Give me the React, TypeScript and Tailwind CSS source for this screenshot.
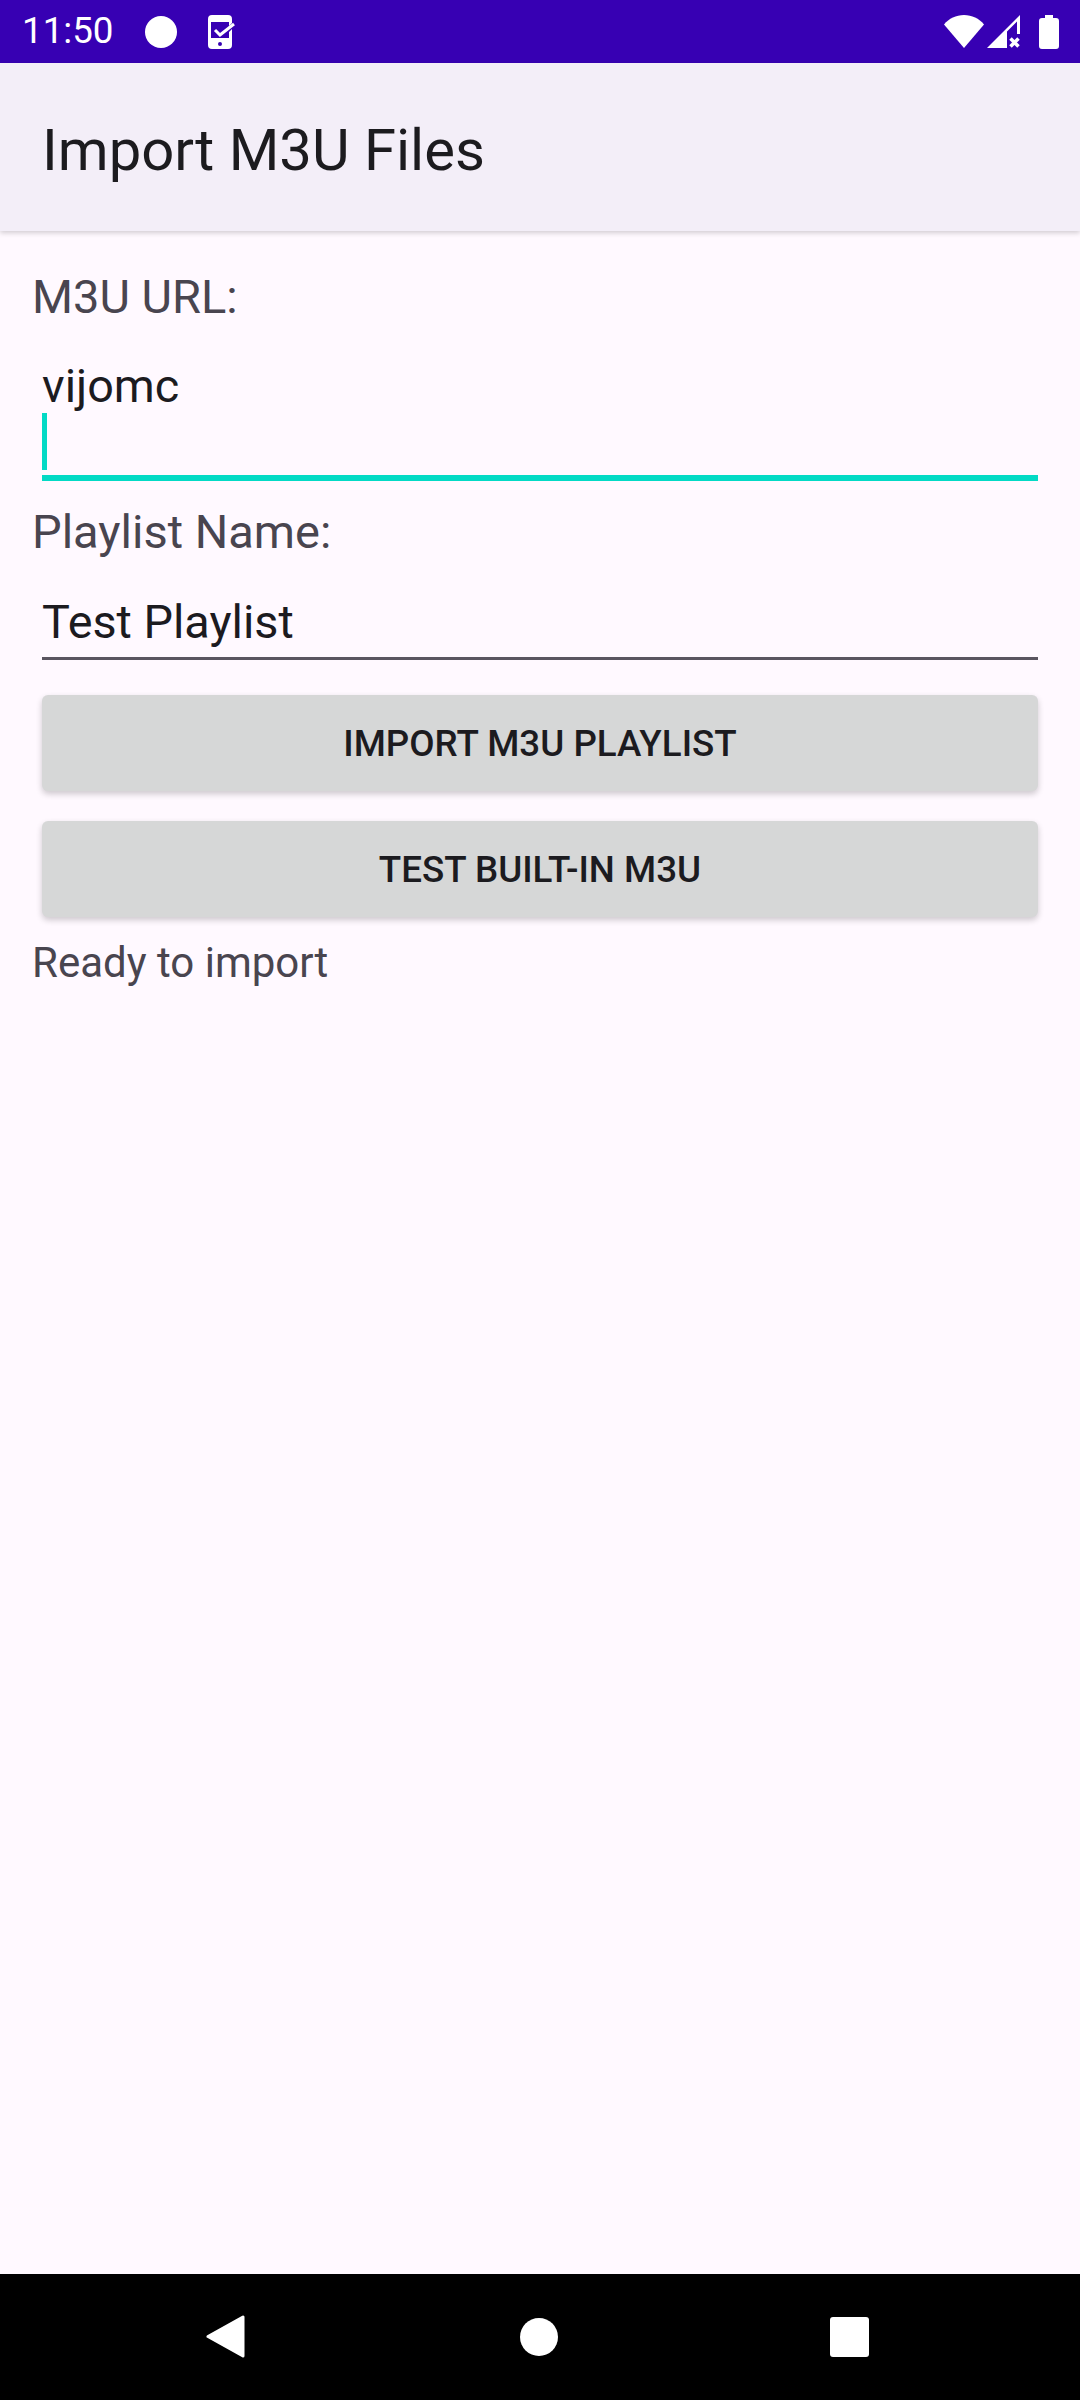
function StatusBar() {
  return (
    <div className="flex h-[63px] shrink-0 items-center bg-[#3700b3] pl-[22px] text-white">
      <span className="w-[100px] text-[36.75px] leading-none">11:50</span>
      <span className="ml-[23px] h-[32px] w-[32px] rounded-full bg-white" />
      <svg className="ml-[31px]" width="28" height="34" viewBox="0 0 28 34" fill="none">
        <path
          fillRule="evenodd"
          fill="#fff"
          d="M4 0h16a4 4 0 0 1 4 4v4l-3 3V7H3v16h18v-6l3-3V30a4 4 0 0 1-4 4H4a4 4 0 0 1-4-4V4a4 4 0 0 1 4-4zM12 27a2 2 0 1 0 0 4a2 2 0 0 0 0-4z"
        />
        <path d="M7 15l5 5L26 9" stroke="#fff" strokeWidth="3" />
      </svg>
      <div className="ml-auto flex items-center pr-[21px]">
        <svg width="40" height="33" viewBox="0 0 40 33">
          <path fill="#fff" d="M0 9.500C5 3.500 12 0 20 0s15 3.500 20 9.500L20 33z" />
        </svg>
        <svg className="ml-[3px]" width="33" height="33" viewBox="0 0 33 33">
          <path fill="#fff" d="M33 0v19h-3V6.500L20 16.500V33H0z" />
          <path d="M23.500 23.500l8 8M31.500 23.500l-8 8" stroke="#fff" strokeWidth="3.500" />
        </svg>
        <svg className="ml-[19px]" width="20" height="34" viewBox="0 0 20 34">
          <path fill="#fff" d="M6 0h8v3h3a3 3 0 0 1 3 3v25a3 3 0 0 1-3 3H3a3 3 0 0 1-3-3V6a3 3 0 0 1 3-3h3z" />
        </svg>
      </div>
    </div>
  );
}

function NavBar() {
  return (
    <div className="flex h-[126px] shrink-0 items-center bg-black pb-[1px]">
      <svg className="ml-[206px]" width="39" height="43" viewBox="0 0 39 43">
        <path fill="#fff" stroke="#fff" strokeWidth="3" strokeLinejoin="round" d="M37 2v39L2 21.500z" />
      </svg>
      <span className="ml-[275px] h-[38px] w-[38px] rounded-full bg-white" />
      <span className="ml-[272px] h-[40px] w-[39px] rounded-[3px] bg-white" />
    </div>
  );
}

function Button({ label }: { label: string }) {
  return (
    <button
      type="button"
      className="flex h-[96px] w-full items-center justify-center rounded-[6px] bg-[#d6d7d7] pt-[2px] text-[36.75px] font-medium text-[#1c1b1f] shadow-[0_3px_6px_rgba(0,0,0,0.2)]"
    >
      {label}
    </button>
  );
}

export default function App() {
  return (
    <div className="flex h-[2400px] w-[1080px] flex-col bg-[#fff9ff] font-['Roboto',sans-serif]">
      <StatusBar />
      <header className="z-10 flex h-[168px] shrink-0 items-center bg-[#f3eef8] pl-[42px] pt-[6px] text-[58px] text-[#1c1b1f] shadow-[0_2px_5px_rgba(0,0,0,0.18)]">
        Import M3U Files
      </header>
      <main className="flex flex-1 flex-col px-[32px] pt-[40px]">
        <div className="text-[47px] leading-[52px] text-[#49454f]">M3U URL:</div>
        <div className="mx-[10px] mt-[37px]">
          <div className="text-[46.75px] leading-[52px] text-[#1c1b1f]">vijomc</div>
          <div className="mt-[1px] h-[57px] w-[5px] bg-[#03dac5]" />
          <div className="mt-[5px] h-[6px] bg-[#03dac5]" />
        </div>
        <div className="mt-[25px] text-[47px] leading-[52px] text-[#49454f]">Playlist Name:</div>
        <div className="mx-[10px] mt-[38px]">
          <div className="text-[46.75px] leading-[52px] text-[#1c1b1f]">Test Playlist</div>
          <div className="mt-[9px] h-[3px] bg-[#5a5560]" />
        </div>
        <div className="mx-[10px] mt-[35px] flex flex-col gap-[30px]">
          <Button label="IMPORT M3U PLAYLIST" />
          <Button label="TEST BUILT-IN M3U" />
        </div>
        <div className="mt-[21px] text-[42px] leading-[50px] text-[#49454f]">Ready to import</div>
      </main>
      <NavBar />
    </div>
  );
}
